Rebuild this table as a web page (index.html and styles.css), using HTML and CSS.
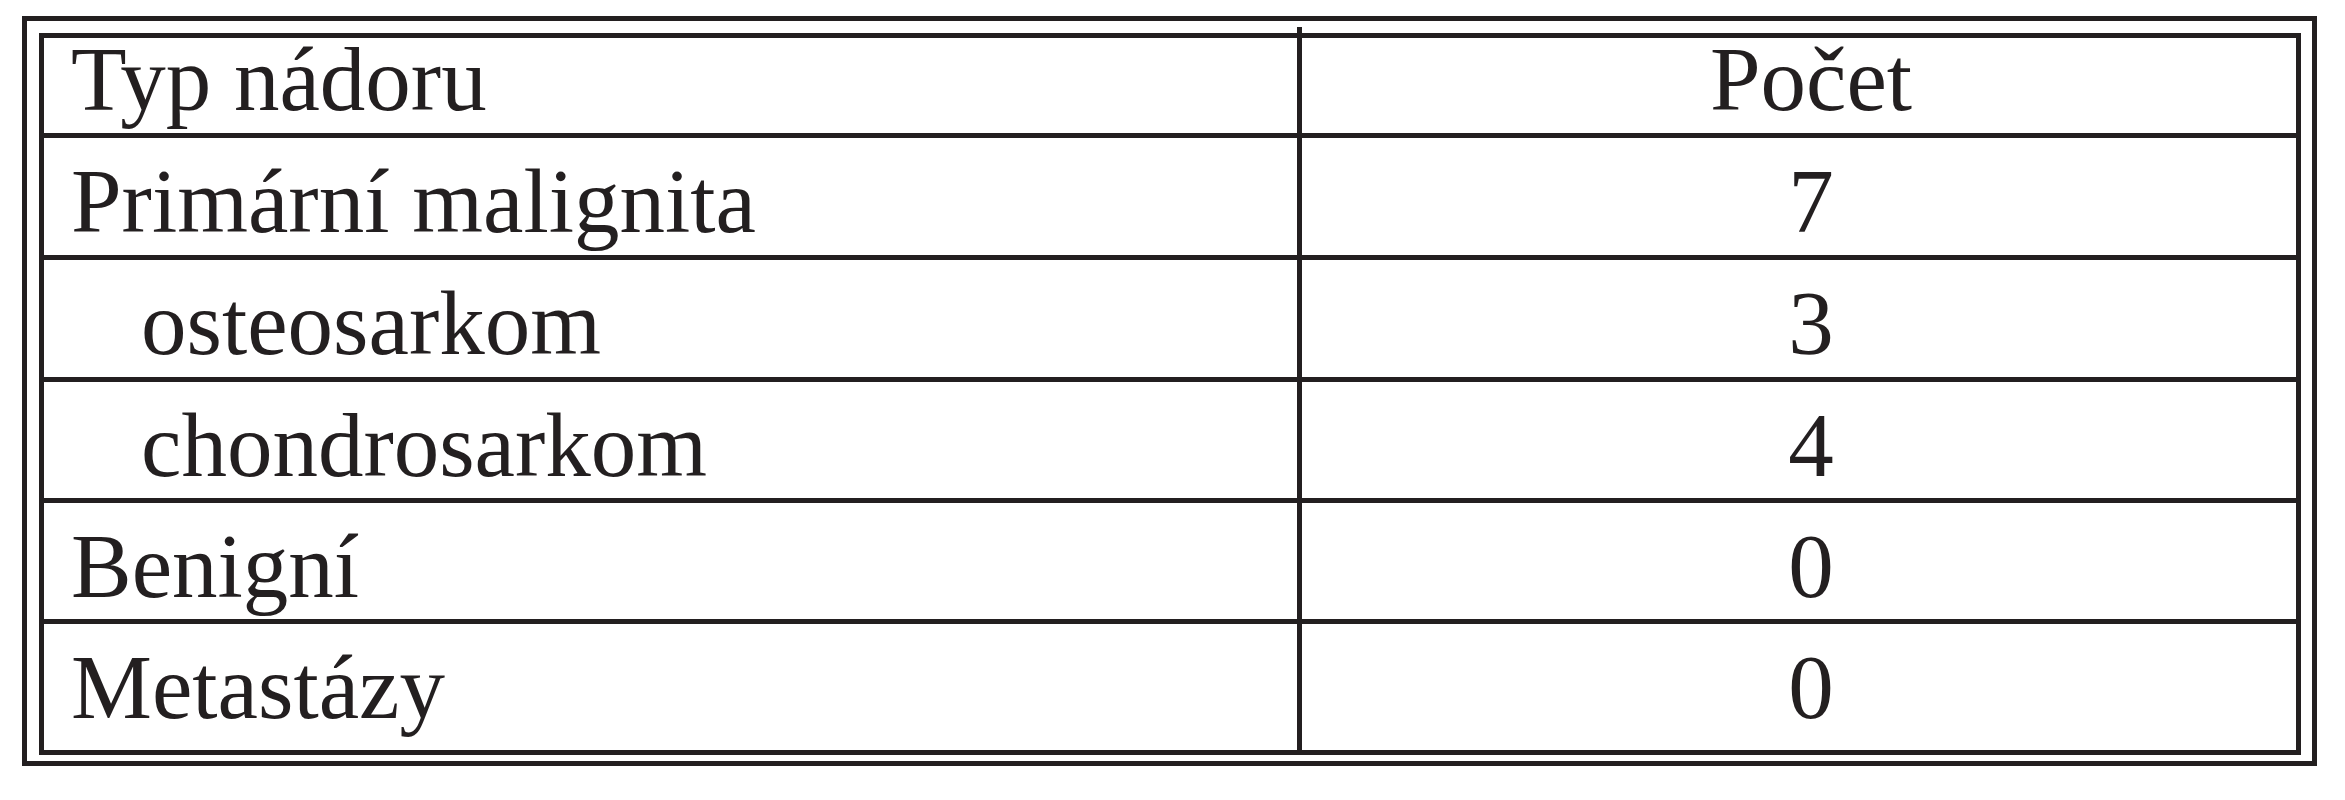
FILE: index.html
```html
<!DOCTYPE html>
<html lang="cs">
<head>
<meta charset="utf-8">
<title>Typ nádoru</title>
<link rel="stylesheet" href="styles.css">
</head>
<body>
<div class="frame">
  <table class="tumors">
    <tbody>
      <tr class="head">
        <td class="name divider-top">Typ nádoru</td>
        <td class="count">Počet</td>
      </tr>
      <tr>
        <td class="name">Primární malignita</td>
        <td class="count">7</td>
      </tr>
      <tr>
        <td class="name sub">osteosarkom</td>
        <td class="count">3</td>
      </tr>
      <tr class="short">
        <td class="name sub">chondrosarkom</td>
        <td class="count">4</td>
      </tr>
      <tr class="short">
        <td class="name">Benigní</td>
        <td class="count">0</td>
      </tr>
      <tr class="last">
        <td class="name">Metastázy</td>
        <td class="count">0</td>
      </tr>
    </tbody>
  </table>
</div>
</body>
</html>
```

FILE: styles.css
```css
html, body {
  margin: 0;
  padding: 0;
  background: #ffffff;
}

body {
  padding: 16px 0 0 22px;
  font-family: "Liberation Serif", "Times New Roman", serif;
  color: #231f20;
}

.frame {
  box-sizing: border-box;
  width: 2295px;
  height: 750px;
  border: 5px solid #231f20;
  padding: 12px 11px 6px 12px;
}

.tumors {
  box-sizing: border-box;
  width: 2262px;
  border: 5px solid #231f20;
  border-collapse: separate;
  border-spacing: 0;
  table-layout: fixed;
}

.tumors td {
  font-size: 91px;
  line-height: 80px;
  padding: 24px 0 13px 0;
  border-bottom: 5px solid #231f20;
  white-space: nowrap;
  vertical-align: top;
}

.tumors tr.head td {
  padding-top: 2px;
  padding-bottom: 13px;
}

.tumors tr.short td {
  padding-bottom: 12px;
}

.tumors tr.last td {
  border-bottom: none;
  padding-bottom: 22px;
}

.tumors td.name {
  box-sizing: border-box;
  width: 1258px;
  padding-left: 27px;
  border-right: 5px solid #231f20;
  text-align: left;
}

.tumors td.name.sub {
  padding-left: 97px;
}

.tumors td.count {
  padding-left: 24px;
  text-align: center;
}

.divider-top {
  position: relative;
}

.divider-top::after {
  content: "";
  position: absolute;
  right: -5px;
  top: -11px;
  width: 5px;
  height: 11px;
  background: #231f20;
}
```
